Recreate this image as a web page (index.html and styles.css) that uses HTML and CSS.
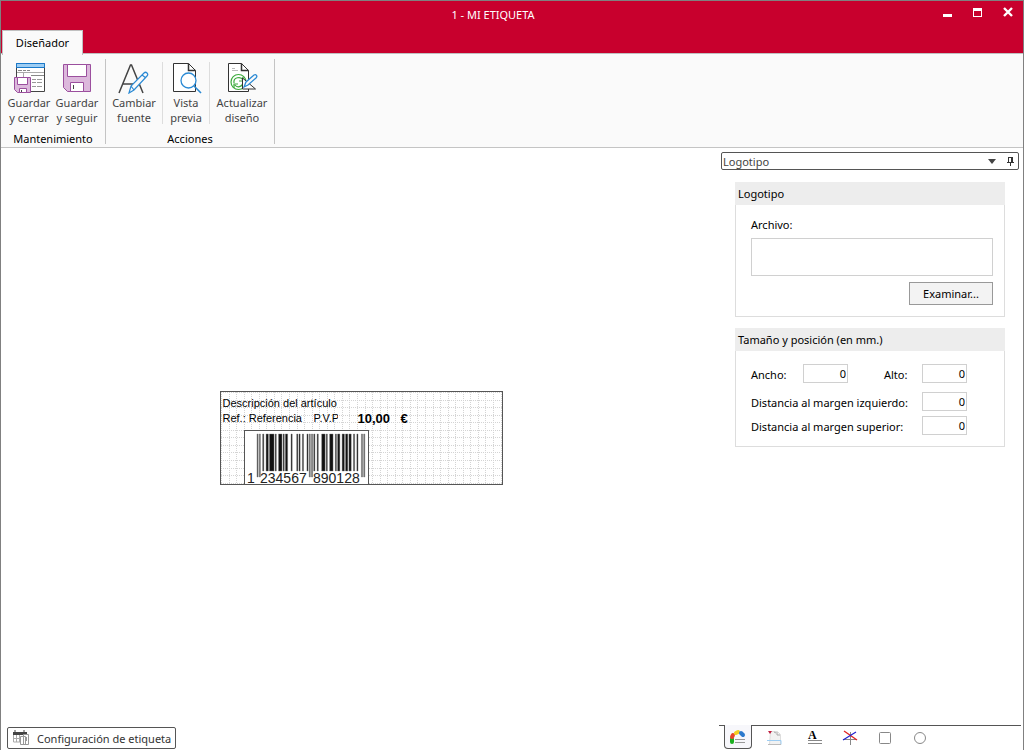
FILE: index.html
```html
<!DOCTYPE html>
<html lang="es">
<head>
<meta charset="utf-8">
<title>1 - MI ETIQUETA</title>
<link rel="stylesheet" href="styles.css">
</head>
<body>
<div class="window">
  <header class="top">
    <div class="titlebar">
      <h1 class="title">1 - MI ETIQUETA</h1>
      <div class="controls">
        <button class="control" aria-label="Minimizar"><svg width="10" height="10" shape-rendering="crispEdges"><rect x="0" y="7" width="9" height="3" fill="#fff"/></svg></button>
        <button class="control" aria-label="Maximizar"><svg width="10" height="10" shape-rendering="crispEdges"><path d="M0 1h9v9H0zM1 4v5h7V4z" fill="#fff" fill-rule="evenodd"/></svg></button>
        <button class="control" aria-label="Cerrar"><svg width="10" height="10"><path d="M1 1l8 8M9 1l-8 8" stroke="#fff" stroke-width="2.400"/></svg></button>
      </div>
    </div>
    <nav class="tabs"><button class="tab">Diseñador</button></nav>
  </header>

  <div class="ribbon">
    <section class="group">
      <div class="tools">
        <button class="tool">
          <svg class="icon" viewBox="0 0 32 32"><path d="M3.500 1.500h28v28h-28z" fill="#fff" stroke="#444"/><path d="M3.500 1.500h28v4h-28z" fill="#9dcdf3" stroke="#1979ca"/><path d="M4 10.500h27M10.500 11v4" stroke="#aaa"/><path d="M5 8.500h4m1 0h3m1 0h3M18 13.500h13" stroke="#888"/><path d="M19 17.500h4m1 0h5M19 20.500h4m1 0h5M19 24.500h4m1 0h5" stroke="#999"/><path d="M1.500 15.500h16v15h-13l-3-3z" fill="#dcb8dc" stroke="#9b4f9e"/><path d="M4.500 15.500h10v7h-10zM6.500 26.500h7v4h-7z" fill="#fff" stroke="#9b4f9e"/><path d="M8.500 28v2" stroke="#444"/></svg>
          <span>Guardar<br>y cerrar</span>
        </button>
        <button class="tool">
          <svg class="icon" viewBox="0 0 32 32"><path d="M2.500 2.500h27v27h-23l-4-4z" fill="#dcb8dc" stroke="#9b4f9e"/><path d="M6.500 2.500h19v12h-19zM9.500 20.500h13v9h-13z" fill="#fff" stroke="#9b4f9e"/><path d="M12.500 23v4" stroke="#444"/></svg>
          <span>Guardar<br>y seguir</span>
        </button>
      </div>
      <h2 class="caption">Mantenimiento</h2>
    </section>
    <section class="group">
      <div class="tools actions">
        <button class="tool font-tool">
          <svg class="icon" viewBox="0 0 32 32"><path d="M1 31L12.500 3h1L25 31M5 22h17" fill="none" stroke="#444" stroke-width="1.500"/><path d="M11 31l2-7 13-13c2-2 5 1 3 3L16 28zM13 24l3 4M24 13l4 3" fill="#fafafa" stroke="#2b8ad4" stroke-width="1.200"/></svg>
          <span>Cambiar<br>fuente</span>
        </button>
        <i class="divider"></i>
        <button class="tool preview">
          <svg class="icon" viewBox="0 0 32 32"><path d="M3.500 1.500h15l7 7v21h-22z" fill="#fff" stroke="#333"/><path d="M18.500 1.500v7h7" fill="none" stroke="#333" stroke-width="1.500"/><circle cx="18.500" cy="18.500" r="7.500" fill="#fff" stroke="#2b8ad4" stroke-width="1.300"/><path d="M24 24l7 7" stroke="#2b8ad4" stroke-width="1.600"/></svg>
          <span>Vista<br>previa</span>
        </button>
        <i class="divider"></i>
        <button class="tool wide">
          <svg class="icon" viewBox="0 0 32 32"><path d="M2.500 1.500h13l7 7v21h-20z" fill="#fff" stroke="#333"/><path d="M15.500 1.500v7h7" fill="none" stroke="#333" stroke-width="1.500"/><path d="M6 6.500h3M6 8.500h6" stroke="#bbb"/><circle cx="12.500" cy="20" r="7.500" fill="#fff" stroke="#3caa3c" stroke-width="1.200"/><path d="M8 21c-1-6 7-7 9-3m0-3v4h-4M17 21c-1 4-6 5-8 2m-1 3v-4h4" fill="none" stroke="#3caa3c" stroke-width="1.200"/><path d="M16.500 16v11h13z" fill="#fff" stroke="#333"/><path d="M18 25l2-5 8-7c2-1 4 1 2 3l-8 7z" fill="#fafafa" stroke="#2b8ad4" stroke-width="1.300"/></svg>
          <span>Actualizar<br>diseño</span>
        </button>
      </div>
      <h2 class="caption">Acciones</h2>
    </section>
  </div>

  <main class="workspace">
    <div class="designer">
      <div class="canvas">
        <div class="label">
          <svg class="grid" width="100%" height="100%" shape-rendering="crispEdges">
            <defs><pattern id="dots" width="68" height="68" patternUnits="userSpaceOnUse"><path d="M0 .5h68M0 8.500h68M0 15.500h68M0 23.500h68M0 30.500h68M0 38.500h68M0 45.500h68M0 53.500h68M0 60.500h68M.5 0v68M8.500 0v68M15.500 0v68M23.500 0v68M30.500 0v68M38.500 0v68M45.500 0v68M53.500 0v68M60.500 0v68" stroke="#d4d4d4" stroke-dasharray="1 1"/></pattern></defs>
            <rect width="100%" height="100%" fill="url(#dots)"/>
          </svg>
          <span class="item description">Descripción del artículo</span>
          <span class="item reference">Ref.: Referencia</span>
          <span class="item pvp">P.V.P</span>
          <span class="item price">10,00</span>
          <span class="item euro">€</span>
          <div class="item barcode">
            <svg width="123" height="53">
              <g transform="translate(12 3) scale(1.135 1)" fill="#111" stroke="#777" stroke-width=".4"><path d="M0 0h1v43h-1zM2 0h1v43h-1zM46 0h1v43h-1zM48 0h1v43h-1zM92 0h1v43h-1zM94 0h1v43h-1z" fill="#555"/><path d="M5 0h1v37h-1zM8 0h2v37h-2zM11 0h4v37h-4zM16 0h1v37h-1zM19 0h3v37h-3zM23 0h1v37h-1zM25 0h2v37h-2zM30 0h1v37h-1zM35 0h1v37h-1zM37 0h1v37h-1zM40 0h1v37h-1zM44 0h1v37h-1zM50 0h1v37h-1zM53 0h1v37h-1zM57 0h3v37h-3zM61 0h1v37h-1zM64 0h3v37h-3zM69 0h1v37h-1zM71 0h2v37h-2zM75 0h2v37h-2zM78 0h2v37h-2zM81 0h2v37h-2zM85 0h1v37h-1zM88 0h1v37h-1z"/></g>
              <g class="digits"><text x="2" y="52">1</text><text x="15" y="52">234567</text><text x="68" y="52">890128</text></g>
            </svg>
          </div>
        </div>
      </div>
      <footer class="status">
        <button class="config">
          <svg width="18" height="18"><path d="M1 3h14v3H1z" fill="#444"/><path d="M3 1v3M12 1v3" stroke="#444"/><path d="M1.500 6v7h7M2 9.500h6M4.500 6v7M7.500 6v7" fill="none" stroke="#aaa"/><path d="M8.500 7.500h5v8h-5zM11.500 5.500h5v10h-5z" fill="#fff" stroke="#999"/><path d="M13 8.500h2M14.500 9v3" stroke="#999"/></svg>
          Configuración de etiqueta
        </button>
      </footer>
    </div>

    <aside class="panel">
      <div class="panel-head">
        <span class="panel-title">Logotipo</span>
        <button class="mini" aria-label="Opciones"><svg width="8" height="5"><path d="M0 0h8L4 5z" fill="#444"/></svg></button>
        <button class="mini" aria-label="Fijar"><svg width="8" height="11" shape-rendering="crispEdges"><path d="M2.500 6V1.500h4V6M5.500 2v4M1 6.500h7M4.500 7v3" fill="none" stroke="#333"/></svg></button>
      </div>
      <div class="properties">
        <section class="box">
          <h2 class="box-title">Logotipo</h2>
          <div class="box-body logo-body">
            <label for="file">Archivo:</label>
            <textarea class="file" id="file"></textarea>
            <button class="browse">Examinar...</button>
          </div>
        </section>
        <section class="box">
          <h2 class="box-title">Tamaño y posición (en mm.)</h2>
          <div class="box-body size-body">
            <div class="field-row">
              <label class="short" for="w">Ancho:</label><input class="number" id="w" value="0">
              <label class="middle" for="h">Alto:</label><input class="number" id="h" value="0">
            </div>
            <div class="field-row distance"><label class="long" for="l">Distancia al margen izquierdo:</label><input class="number" id="l" value="0"></div>
            <div class="field-row"><label class="long" for="t">Distancia al margen superior:</label><input class="number" id="t" value="0"></div>
          </div>
        </section>
      </div>
      <div class="palette">
        <button class="shape active" aria-label="Logotipo"><svg width="18" height="16"><path d="M3 13V10" stroke="#1bb020" stroke-width="4" stroke-linecap="round"/><path d="M3 8l1-2" stroke="#e5442c" stroke-width="4" stroke-linecap="round"/><path d="M7 4l2-1" stroke="#f2cf21" stroke-width="4" stroke-linecap="round"/><path d="M12 4l2 2" stroke="#2b79cd" stroke-width="4" stroke-linecap="round"/><path d="M6 10.500h10M6 13.500h10" stroke="#999"/></svg></button>
        <button class="shape" aria-label="Imagen"><svg width="28" height="16"><path d="M4.500 1.500h7l3 3v10h-11z" fill="#f2f2f2" stroke="#ddd"/><path d="M2 1h4L4 4z" fill="#c02040"/><path d="M8 2l2 1M11 2v3h3" stroke="#aaa" fill="none"/><path d="M1 10.500h14v4" fill="none" stroke="#9dcdf3"/><path d="M2 14.500h13" stroke="#bbb"/></svg></button>
        <button class="shape" aria-label="Texto"><svg width="18" height="16"><text class="letter" x="2" y="9">A</text><path d="M2 10.500h14M2 13.500h14" stroke="#888"/></svg></button>
        <button class="shape" aria-label="Línea"><svg width="18" height="16"><path d="M2 9.500h14M9.500 2v13" stroke="#888"/><path d="M3 1l13 9" stroke="#e02020" stroke-width="1.300"/><path d="M15 2L2 10" stroke="#2020d0" stroke-width="1.300"/></svg></button>
        <button class="shape" aria-label="Rectángulo"><svg width="18" height="16"><rect x="3.500" y="2.500" width="11" height="11" rx="1" fill="none" stroke="#888"/></svg></button>
        <button class="shape" aria-label="Elipse"><svg width="18" height="16"><circle cx="9" cy="8" r="5.500" fill="none" stroke="#888"/></svg></button>
      </div>
    </aside>
  </main>
</div>
</body>
</html>
```
FILE: styles.css
```css
* { box-sizing: border-box; }
body { margin: 0; font: 11px/15px "Noto Sans", "Open Sans", sans-serif; color: #000; background: #fff; }
button { margin: 0; padding: 0; border: 0; background: none; font: inherit; color: inherit; }
h1, h2 { margin: 0; font: inherit; }
svg { display: block; }

.window { display: flex; flex-direction: column; min-height: 100vh; border: 1px solid #808080; border-bottom: 0; }
.top { background: #c8002d; border-bottom: 1px solid #c0c0c0; }
.titlebar { display: flex; height: 29px; padding-left: 46px; color: #fff; }
.title { flex: 1; text-align: center; line-height: 28px; }
.controls { display: flex; justify-content: space-between; width: 84px; padding: 6px 10px 0 4px; }
.control { height: 10px; }
.tabs { display: flex; height: 23px; padding-left: 1px; }
.tab { width: 81px; height: 25px; padding-bottom: 2px; border: 1px solid #c0c0c0; border-bottom: 0; background: #fafafa; position: relative; z-index: 1; }

.ribbon { display: flex; height: 94px; background: #fafafa; border-bottom: 1px solid #c4c4c4; }
.group { display: flex; flex-direction: column; margin: 5px 0 3px; border-right: 1px solid #c4c4c4; }
.tools { display: flex; padding: 3px 4px 0; }
.actions { padding-right: 0; }
.tool { display: flex; flex-direction: column; align-items: center; gap: 1px; width: 48px; height: 63px; color: #444; }
.font-tool { margin-right: 4px; }
.preview { width: 46px; }
.wide { width: 64px; }
.icon { width: 32px; height: 32px; }
.divider { width: 1px; height: 62px; background: #ddd; }
.caption { padding-top: 6px; text-align: center; }

.workspace { display: flex; flex: 1; }
.designer { display: flex; flex: 1; flex-direction: column; }
.canvas { display: flex; flex: 1; align-items: center; justify-content: center; }
.label { position: relative; width: 283px; height: 94px; overflow: hidden; border: 1px solid #555; font: 11px/13px "Liberation Sans", Arial, sans-serif; }
.grid { position: absolute; inset: 0; }
.item { position: absolute; white-space: nowrap; }
.description { left: 2px; top: 5px; }
.reference { left: 2px; top: 20px; }
.pvp { left: 93px; top: 20px; width: 24px; overflow: hidden; }
.price, .euro { top: 19px; font-size: 13px; line-height: 16px; font-weight: bold; }
.price { left: 137px; }
.euro { left: 180px; }
.barcode { left: 23px; top: 38px; width: 125px; height: 56px; border: 1px solid #555; background: #fff; }
.digits { font-size: 14px; fill: #222; }

.status { height: 23px; padding-left: 6px; }
.config { display: flex; align-items: center; gap: 7px; height: 22px; padding: 0 4px; border: 1px solid #555; border-radius: 2px; color: #333; background: #fff; }

.panel { display: flex; flex-direction: column; width: 302px; padding: 4px 0 0; }
.panel-head { display: flex; align-items: center; gap: 10px; height: 18px; margin-right: 4px; padding: 0 4px 0 1px; border: 1px solid #555; border-radius: 2px; color: #444; }
.panel-title { flex: 1; }
.properties { display: flex; flex: 1; flex-direction: column; gap: 11px; padding: 12px 18px 0 14px; }
.box { border: 1px solid #ddd; border-top: 0; }
.box-title { height: 23px; margin: 0 -1px; padding-left: 3px; background: #ededed; line-height: 23px; }
.logo-body { display: flex; flex-direction: column; padding: 12px 11px 11px 15px; }
.file { width: 100%; height: 38px; margin-top: 6px; border: 1px solid #d0d0d0; border-radius: 0; resize: none; font: inherit; }
.browse { align-self: flex-end; width: 84px; height: 23px; margin-top: 6px; border: 1px solid #999; background: #f3f3f3; }
.size-body { display: flex; flex-direction: column; gap: 5px; padding: 13px 37px 11px 15px; }
.field-row { display: flex; align-items: center; }
.field-row label { padding-top: 2px; }
.distance { margin-top: 4px; }
.short { width: 52px; }
.middle { flex: 1; padding-left: 36px; }
.long { flex: 1; }
.number { width: 45px; height: 19px; padding: 0 1px 1px; border: 1px solid #d0d0d0; border-radius: 0; text-align: right; font: inherit; }

.palette { display: flex; gap: 5px; height: 25px; margin: 0 2px 0 -2px; padding-left: 5px; border-top: 1px solid #555; }
.shape { display: flex; align-items: center; justify-content: center; width: 30px; height: 23px; }
.active { position: relative; top: -1px; width: 28px; height: 24px; margin-right: 8px; border: 1px solid #555; border-top: 0; border-radius: 0 0 4px 4px; background: #f7f7fb; }
.letter { font: bold 12px "Liberation Serif", serif; }
```
